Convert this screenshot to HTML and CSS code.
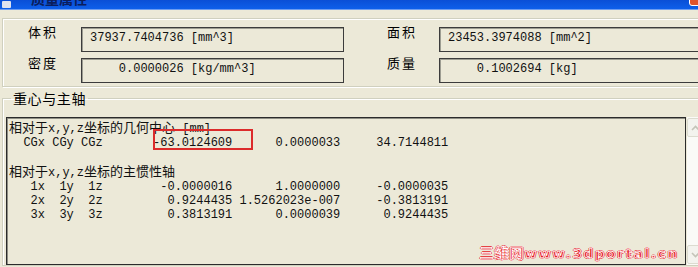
FILE: index.html
```html
<!DOCTYPE html>
<html lang="zh-CN">

<head>
    <meta charset="UTF-8">
    <title>质量属性</title>
    <link rel="stylesheet" href="styles.css">
</head>

<body>
    <div class="window">
        <div class="titlebar">
            <span class="app-icon"></span>
            <span class="title">质量属性</span>
            <span class="close-btn"></span>
        </div>

        <div class="client">
            <div class="group summary">
                <span class="field-label">体积</span>
                <div class="field">37937.7404736 [mm^3]</div>
                <span class="field-label">面积</span>
                <div class="field">23453.3974088 [mm^2]</div>

                <span class="field-label">密度</span>
                <div class="field">    0.0000026 [kg/mm^3]</div>
                <span class="field-label">质量</span>
                <div class="field">    0.1002694 [kg]</div>
            </div>

            <fieldset class="group axes">
                <legend>重心与主轴</legend>
                <div class="output-row">
                    <div class="output">
<pre><span class="cn">相对于</span>x,y,z<span class="cn">坐标的几何中心</span> [mm]
  CGx CGy CGz       -63.0124609      0.0000033     34.7144811

<span class="cn">相对于</span>x,y,z<span class="cn">坐标的主惯性轴</span>
   1x  1y  1z        -0.0000016      1.0000000     -0.0000035
   2x  2y  2z         0.9244435 1.5262023e-007     -0.3813191
   3x  3y  3z         0.3813191      0.0000039      0.9244435</pre>
                        <div class="mark"></div>
                        <div class="watermark"><span class="wm-cn">三维网</span>www.3dportal.cn</div>
                    </div>
                    <div class="scrollbar">
                        <div class="scroll-btn">
                            <svg width="9" height="6" viewBox="0 0 9 6"><polyline points="1,5 4.5,1.5 8,5" fill="none" stroke="#c4c4b8" stroke-width="1.6"/></svg>
                        </div>
                        <div class="scroll-btn">
                            <svg width="9" height="6" viewBox="0 0 9 6"><polyline points="1,1 4.5,4.5 8,1" fill="none" stroke="#c4c4b8" stroke-width="1.6"/></svg>
                        </div>
                    </div>
                </div>
            </fieldset>
        </div>
    </div>
</body>

</html>
```

FILE: styles.css
```css
html,
body {
    margin: 0;
    overflow: hidden;
}

body {
    background: #ece9d8;
    font-family: "Liberation Mono", "Noto Sans CJK SC", monospace;
    font-size: 12px;
    color: #111;
}

.window {
    width: 712px;
}

/* XP style caption, only its lower edge is in view */
.titlebar {
    display: flex;
    align-items: flex-end;
    height: 9px;
    overflow: hidden;
    background: linear-gradient(#0a4fd6, #0d5fea);
    border-bottom: 1px solid #6d9cf0;
}

.app-icon {
    width: 9px;
    height: 7px;
    margin: 0 0 1px 2px;
    background: #dfe3ee;
    border-radius: 1px;
}

.title {
    margin: 0 0 3px 20px;
    font: bold 14px/16px "Noto Sans CJK SC", sans-serif;
    color: #0b1d5c;
}

.close-btn {
    margin-left: auto;
    width: 21px;
    height: 21px;
    margin-bottom: 3px;
    background: #e2532c;
    border: 1px solid #fff;
    border-radius: 3px;
}

.client {
    padding: 8px 0 0 2px;
}

.group {
    border: 1px solid #d0d0bf;
    box-shadow: inset 1px 1px 0 #fff, 1px 1px 0 #fff;
}

.summary {
    display: grid;
    grid-template-columns: 53px 263px 95px 270px;
    row-gap: 6px;
    padding: 8px 0 3px 25px;
}

.field-label {
    margin-top: -2px;
    font: 13px/14px "Noto Sans CJK SC", sans-serif;
    letter-spacing: 2px;
    color: #000;
}

.summary .field-label:nth-child(4n+3) {
    padding-left: 43px;
}

.field {
    height: 25px;
    box-sizing: border-box;
    padding-left: 8px;
    line-height: 21px;
    white-space: pre;
    border: 1px solid #3c3c3c;
    box-shadow: inset 1px 1px 0 #9d9d92;
}

.axes {
    margin: 3px 0 0;
    padding: 11px 0 0 3px;
    min-width: 0;
}

.axes legend {
    margin-left: 5px;
    padding: 0 2px;
    font: 14px/16px "Noto Sans CJK SC", sans-serif;
    letter-spacing: 0.6px;
    color: #000;
}

.output-row {
    display: flex;
    height: 148px;
}

.output {
    position: relative;
    flex: none;
    width: 680px;
    box-sizing: border-box;
    border: 1px solid #2b2b2b;
    box-shadow: inset 1px 1px 0 #8e8e84;
}

.output pre {
    margin: 0;
    padding: 2px 0 0 2px;
    font: 12px/14px "Liberation Mono", "Noto Sans CJK SC", monospace;
}

.output .cn {
    display: inline-block;
    line-height: 14px;
    font-family: "Noto Sans CJK SC", sans-serif;
    font-size: 13px;
}

/* red box drawn over the first value */
.mark {
    position: absolute;
    left: 146px;
    top: 11px;
    width: 100px;
    height: 21px;
    box-sizing: border-box;
    border: 2px solid #dc2b2b;
}

.watermark {
    position: absolute;
    right: 6px;
    bottom: 2px;
    font: bold 13px/16px "DejaVu Sans", sans-serif;
    letter-spacing: 2px;
    color: #e3161e;
    -webkit-text-stroke: 0.8px #fff;
    text-shadow: 1px 0 #e3161e, -1px 0 #e3161e, 0 1px #e3161e, 0 -1px #e3161e;
}

.wm-cn {
    font: bold 14px/16px "Noto Sans CJK SC", sans-serif;
    letter-spacing: 1px;
}

.scrollbar {
    flex: none;
    width: 16px;
    margin-left: 1px;
    padding: 1px 0;
    display: flex;
    flex-direction: column;
    justify-content: space-between;
    background: #fafaf7;
}

.scroll-btn {
    height: 17px;
    display: flex;
    align-items: center;
    justify-content: center;
    background: #f3f3ee;
    border: 1px solid #dcdcd0;
    border-radius: 2px;
}
```
